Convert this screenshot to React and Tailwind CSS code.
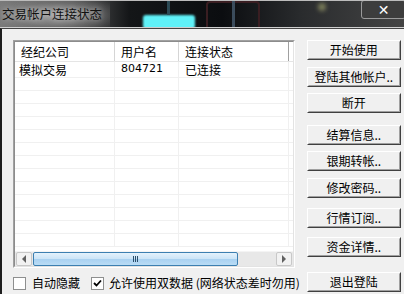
import React from 'react';

const CJK = { fontFamily: '"Noto Sans CJK SC", "Liberation Sans", sans-serif' };

// classic sunken/raised win32 button
function Btn({ label, className = '' }) {
  return (
    <div className={`h-[20px] w-[94px] border border-t-white border-l-white border-b-[#404040] border-r-[#404040] ${className}`}>
      <div className="h-full w-full border border-t-[#f0f0f0] border-l-[#f0f0f0] border-b-[#a0a0a0] border-r-[#a0a0a0] bg-[#f0f0f0] flex items-center justify-center text-[12px] leading-none text-black">
        {label}
      </div>
    </div>
  );
}

function CheckBox({ checked }) {
  return (
    <div className="w-[13px] h-[13px] border border-[#8e8f8f] bg-white flex items-center justify-center">
      {checked && (
        <svg width="9" height="9" viewBox="0 0 9 9">
          <path d="M1 4 L3.5 6.5 L8 1.5" stroke="#000" strokeWidth="1.8" fill="none" />
        </svg>
      )}
    </div>
  );
}

const buttons = [
  { label: '开始使用', mt: 'mt-0' },
  { label: '登陆其他帐户..', mt: 'mt-[7px]' },
  { label: '断开', mt: 'mt-[6px]' },
  { label: '结算信息..', mt: 'mt-[12px]' },
  { label: '银期转帐..', mt: 'mt-[6px]' },
  { label: '修改密码..', mt: 'mt-[7px]' },
  { label: '行情订阅..', mt: 'mt-[10px]' },
  { label: '资金详情..', mt: 'mt-[9px]' },
];

export default function App() {
  const emptyRows = Array.from({ length: 13 });

  return (
    <div className="w-[404px] h-[294px] overflow-hidden flex flex-col bg-[#f0f0f0]" style={CJK}>
      {/* aero-glass title bar */}
      <div className="relative h-[28px] shrink-0 overflow-hidden bg-[linear-gradient(90deg,#7a7a7a_0%,#5a5a5a_18%,#141618_32%,#0b0d10_55%,#2a2c2e_75%,#444_100%)] border-t border-[#bcbcbc]">
        <div className="absolute left-0 top-0 w-[110px] h-[28px] bg-[radial-gradient(ellipse_at_center,rgba(170,170,170,0.85)_0%,rgba(120,120,120,0.5)_60%,rgba(80,80,80,0)_100%)]" />
        <div className="absolute left-[143px] top-[14px] w-[52px] h-[14px] rounded-[3px] bg-[#5ff1f8] blur-[1px]" />
        <div className="absolute left-[167px] top-0 w-[3px] h-[14px] bg-[#2c4a55]" />
        <div className="absolute left-[206px] top-0 w-[54px] h-[30px] border-2 border-[#3a1e22] rounded-sm" />
        <div className="absolute left-[232px] top-0 w-[3px] h-[28px] bg-[#3b4c5c]" />
        <div className="absolute left-[318px] top-[2px] w-[8px] h-[8px] rounded-full bg-[#7b7d5a] blur-[2px]" />
        <div className="relative pl-[2px] pt-[5px] text-[12.5px] leading-[16px] text-[#111] [text-shadow:0_0_6px_#d8d8d8]">
          交易帐户连接状态
        </div>
        <div className="absolute right-[-2px] top-[-1px] w-[45px] h-[19px] border border-[#9a9a9a] rounded-[3px] bg-[#3d3d3d] flex items-center justify-center">
          <span className="text-white text-[14px] font-bold leading-none" style={{ fontFamily: '"DejaVu Sans", sans-serif' }}>✕</span>
        </div>
        <div className="absolute left-0 bottom-0 w-full h-px bg-[#cfcfcf]" />
      </div>

      {/* window body */}
      <div className="flex-1 flex border-l-2 border-[#1e1e1e] border-t border-t-[#444]">
        <div className="flex flex-col pl-[11px] pt-[11px]">
          {/* list view */}
          <div className="w-[282px] h-[228px] border border-t-[#a0a0a0] border-l-[#a0a0a0] border-b-white border-r-white">
            <div className="w-full h-full bg-white flex flex-col border border-t-[#8c8c8c] border-l-[#8c8c8c] border-b-[#e3e3e3] border-r-[#e3e3e3] overflow-hidden">
              <div className="flex-1 relative overflow-hidden">
                {/* header */}
                <div className="flex h-[20px] border-b border-[#e5e5e5] text-[12px] text-black items-center">
                  <div className="w-[100px] pl-[6px] border-r border-[#d5d5d5] h-full flex items-center">经纪公司</div>
                  <div className="w-[64px] pl-[6px] border-r border-[#d5d5d5] h-full flex items-center">用户名</div>
                  <div className="w-[110px] pl-[6px] border-r border-[#a0a0a0] h-full flex items-center">连接状态</div>
                </div>
                {/* row */}
                <div className="flex h-[16px] border-b border-[#f0f0f0] text-[12px] text-black items-center">
                  <div className="w-[100px] pl-[4px] border-r border-[#f0f0f0] h-full flex items-center">模拟交易</div>
                  <div className="w-[64px] pl-[6px] border-r border-[#f0f0f0] h-full flex items-center text-[11px]" style={{ fontFamily: '"DejaVu Sans", sans-serif' }}>804721</div>
                  <div className="w-[110px] pl-[6px] border-r border-[#f0f0f0] h-full flex items-center">已连接</div>
                </div>
                {emptyRows.map((_, i) => (
                  <div key={i} className="flex h-[13px] border-b border-[#f0f0f0]">
                    <div className="w-[100px] border-r border-[#f0f0f0] h-full" />
                    <div className="w-[64px] border-r border-[#f0f0f0] h-full" />
                    <div className="w-[110px] border-r border-[#f0f0f0] h-full" />
                  </div>
                ))}
              </div>
              {/* horizontal scrollbar */}
              <div className="h-[15px] shrink-0 flex items-stretch bg-[#e8e8e8] border-t border-[#f4f4f4] px-px">
                <div className="w-[16px] flex items-center justify-center border border-[#c8c8c8] rounded-[2px] bg-[#f2f2f2]">
                  <div className="w-0 h-0 border-y-[4px] border-y-transparent border-r-[4px] border-r-[#606060]" />
                </div>
                <div className="w-[205px] ml-px border border-[#3c7fb1] rounded-[2px] bg-[linear-gradient(180deg,#e4f2fc_0%,#cbe4f7_50%,#a9d1f1_51%,#b9dcf5_100%)] flex items-center justify-center">
                  <div className="flex gap-px">
                    <div className="w-px h-[6px] bg-[#2a4e6b]" />
                    <div className="w-px h-[6px] bg-[#2a4e6b]" />
                    <div className="w-px h-[6px] bg-[#2a4e6b]" />
                  </div>
                </div>
                <div className="flex-1" />
                <div className="w-[16px] flex items-center justify-center border border-[#c8c8c8] rounded-[2px] bg-[#f2f2f2]">
                  <div className="w-0 h-0 border-y-[4px] border-y-transparent border-l-[4px] border-l-[#606060]" />
                </div>
              </div>
            </div>
          </div>

          {/* options */}
          <div className="flex items-center mt-[6px] text-[12px] text-black">
            <CheckBox />
            <span className="ml-[6px]">自动隐藏</span>
            <div className="ml-[11px]"><CheckBox checked /></div>
            <span className="ml-[5px] whitespace-nowrap">允许使用双数据 (网络状态差时勿用)</span>
          </div>
        </div>

        {/* buttons */}
        <div className="flex flex-col ml-[7px] pt-[11px]">
          {buttons.map((b) => (
            <Btn key={b.label} label={b.label} className={b.mt} />
          ))}
          <Btn label="退出登陆" className="mt-[15px]" />
        </div>
      </div>
    </div>
  );
}
